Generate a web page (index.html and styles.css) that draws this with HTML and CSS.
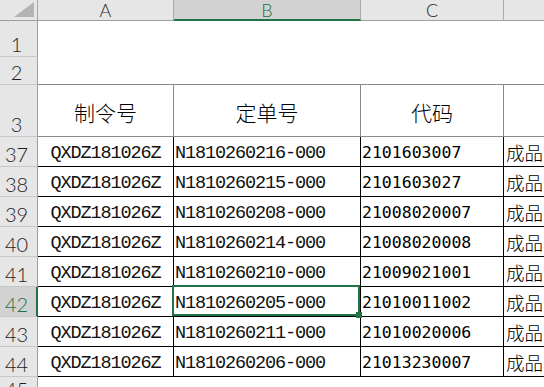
FILE: index.html
```html
<!DOCTYPE html>
<html>
<head>
<meta charset="utf-8">
<link rel="stylesheet" href="styles.css">
</head>
<body>
<div class="sheet">
  <div class="corner"><svg class="tri" width="20" height="15" viewBox="0 0 20 15"><polygon points="0,15 20,15 20,0" fill="#b4b4b4"/></svg></div>
  <div class="colhdr"><span>A</span></div>
  <div class="colhdr sel"><span>B</span></div>
  <div class="colhdr"><span>C</span></div>
  <div class="colhdr last"></div>

  <div class="rowhdr">1</div>
  <div class="cell"></div><div class="cell"></div><div class="cell"></div><div class="cell"></div>

  <div class="rowhdr">2</div>
  <div class="cell r2"></div><div class="cell r2"></div><div class="cell r2"></div><div class="cell r2"></div>

  <div class="rowhdr">3</div>
  <div class="cell r3 head">制令号</div>
  <div class="cell r3 head">定单号</div>
  <div class="cell r3 head">代码</div>
  <div class="cell r3"></div>

  <div class="rowhdr">37</div>
  <div class="cell d a">QXDZ181026Z</div><div class="cell d b">N1810260216-000</div><div class="cell d c">2101603007</div><div class="cell d e">成品</div>
  <div class="rowhdr">38</div>
  <div class="cell d a">QXDZ181026Z</div><div class="cell d b">N1810260215-000</div><div class="cell d c">2101603027</div><div class="cell d e">成品</div>
  <div class="rowhdr">39</div>
  <div class="cell d a">QXDZ181026Z</div><div class="cell d b">N1810260208-000</div><div class="cell d c">21008020007</div><div class="cell d e">成品</div>
  <div class="rowhdr">40</div>
  <div class="cell d a">QXDZ181026Z</div><div class="cell d b">N1810260214-000</div><div class="cell d c">21008020008</div><div class="cell d e">成品</div>
  <div class="rowhdr">41</div>
  <div class="cell d a">QXDZ181026Z</div><div class="cell d b">N1810260210-000</div><div class="cell d c">21009021001</div><div class="cell d e">成品</div>
  <div class="rowhdr sel">42</div>
  <div class="cell d a">QXDZ181026Z</div><div class="cell d b active">N1810260205-000</div><div class="cell d c">21010011002</div><div class="cell d e">成品</div>
  <div class="rowhdr">43</div>
  <div class="cell d a">QXDZ181026Z</div><div class="cell d b">N1810260211-000</div><div class="cell d c">21010020006</div><div class="cell d e">成品</div>
  <div class="rowhdr">44</div>
  <div class="cell d a">QXDZ181026Z</div><div class="cell d b">N1810260206-000</div><div class="cell d c">21013230007</div><div class="cell d e">成品</div>

  <div class="rowhdr">45</div>
  <div class="cell"></div><div class="cell"></div><div class="cell"></div><div class="cell"></div>
</div>
</body>
</html>
```
FILE: styles.css
```css
html, body {
  margin: 0;
  padding: 0;
  background: #fff;
  overflow: hidden;
}
body {
  width: 544px;
  height: 387px;
}
.sheet {
  display: grid;
  grid-template-columns: 38px 136px 187px 143px 200px;
  grid-template-rows: 21px 36px 28px 52px repeat(8, 30px) 25px;
  width: 704px;
}
.sheet > div {
  box-sizing: border-box;
  min-width: 0;
}
.corner {
  background: #e6e6e6;
  border-right: 1px solid #a6a6a6;
  border-bottom: 1px solid #9e9e9e;
  display: flex;
  justify-content: flex-end;
  align-items: flex-end;
}
.tri {
  display: block;
  margin: 0 3px 3px 0;
}
.colhdr {
  background: #e6e6e6;
  border-right: 1px solid #ababab;
  border-bottom: 1px solid #9e9e9e;
  font-family: Lato, "Open Sans", sans-serif;
  font-weight: 300;
  font-size: 18px;
  line-height: 20px;
  color: #1e1e1e;
  text-align: center;
}
.colhdr span {
  display: inline-block;
  line-height: 20px;
  margin-top: -2px;
}
.colhdr.sel {
  background: #d2d2d2;
  color: #217346;
  border-bottom: 2px solid #217346;
}
.rowhdr {
  background: #e6e6e6;
  border-right: 1px solid #9e9e9e;
  border-bottom: 1px solid #c6c6c6;
  font-family: Lato, "Open Sans", sans-serif;
  font-weight: 300;
  font-size: 20px;
  line-height: 20px;
  color: #1e1e1e;
  display: flex;
  justify-content: center;
  align-items: flex-end;
  padding: 0 4px 2px 0;
}
.rowhdr.sel {
  background: #d2d2d2;
  color: #217346;
  border-right: 2px solid #217346;
  padding-right: 3px;
}
.cell {
  background: #fff;
  white-space: nowrap;
  overflow: hidden;
  color: #000;
}
.cell.r2 {
  border-bottom: 1px solid #8a8a8a;
}
.cell.r3 {
  border-right: 1px solid #8a8a8a;
  border-bottom: 1px solid #8a8a8a;
}
.cell.head {
  font-family: "Noto Sans CJK SC", sans-serif;
  font-weight: 300;
  font-size: 21px;
  line-height: 24px;
  text-align: center;
  padding-top: 15px;
}
.cell.d {
  border-right: 1px solid #000;
  border-bottom: 1px solid #000;
  padding-left: 1px;
}
.cell.a, .cell.b {
  font-family: "Liberation Mono", monospace;
  font-size: 18.5px;
  letter-spacing: -1.1px;
  line-height: 20px;
  padding-top: 7px;
  color: #111;
}
.cell.a {
  text-align: center;
  padding-left: 0;
}
.cell.c {
  font-family: "DejaVu Sans Mono", monospace;
  font-size: 16.5px;
  line-height: 20px;
  padding-top: 6px;
}
.cell.e {
  font-family: "Noto Sans CJK SC", sans-serif;
  font-weight: 300;
  font-size: 18.5px;
  line-height: 20px;
  padding-top: 5px;
  padding-left: 2px;
}
.cell.active {
  position: relative;
  z-index: 2;
  overflow: visible;
}
.cell.active::after {
  content: "";
  position: absolute;
  left: -2px;
  top: -2px;
  right: 0;
  bottom: 0;
  border: 2px solid #217346;
}
.cell.active::before {
  content: "";
  position: absolute;
  right: -2px;
  bottom: -2px;
  width: 6px;
  height: 6px;
  background: #217346;
  z-index: 1;
}
```
